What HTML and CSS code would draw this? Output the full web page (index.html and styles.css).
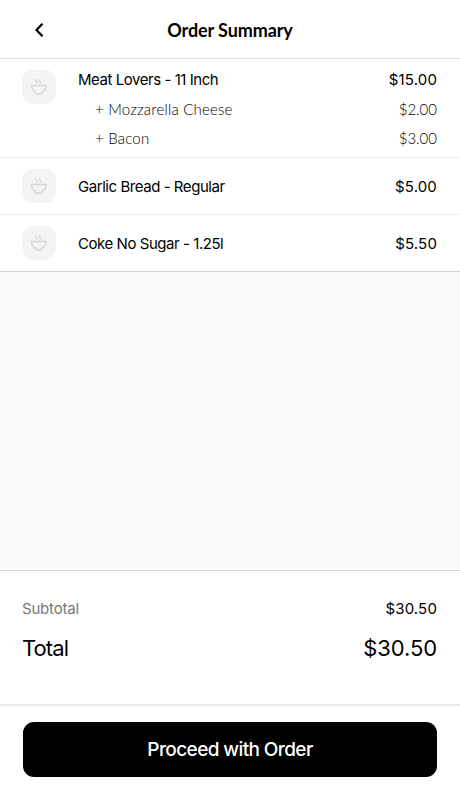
FILE: index.html
```html
<!DOCTYPE html>
<html lang="en">
<head>
    <meta charset="UTF-8">
    <title>Order Summary</title>
    <link rel="stylesheet" href="styles.css">
</head>
<body>
    <svg width="0" height="0" class="symbols">
        <symbol id="bowl" viewBox="0 0 18 18">
            <path d="M1.500 7.500h14.600c0 3.200-1.500 5.300-3.900 6.600l-.7 1.900H6.100l-.7-1.900C3 12.800 1.500 10.700 1.500 7.500z"/>
            <path d="M5.200 1.200c0 1.700 1.700 2 2 4.200M8.900 1.200c0 1.700 1.700 2 2 4.200"/>
        </symbol>
    </svg>
    <header class="header">
        <button class="back" aria-label="Back">
            <svg width="10" height="16" viewBox="0 0 10 16"><path d="M8.500 1.800L2.500 8l6 6.200"/></svg>
        </button>
        <h1 class="title">Order Summary</h1>
    </header>
    <main class="items">
        <div class="item item-first">
            <div class="thumb"><svg class="bowl"><use href="#bowl"/></svg></div>
            <div class="details">
                <div class="line"><span class="name">Meat Lovers - 11 Inch</span><span class="price">$15.00</span></div>
                <div class="line extra"><span class="extra-name">+ Mozzarella Cheese</span><span>$2.00</span></div>
                <div class="line extra"><span class="extra-name">+ Bacon</span><span>$3.00</span></div>
            </div>
        </div>
        <div class="item">
            <div class="thumb"><svg class="bowl"><use href="#bowl"/></svg></div>
            <div class="details">
                <div class="line"><span class="name">Garlic Bread - Regular</span><span class="price">$5.00</span></div>
            </div>
        </div>
        <div class="item">
            <div class="thumb"><svg class="bowl"><use href="#bowl"/></svg></div>
            <div class="details">
                <div class="line"><span class="name">Coke No Sugar - 1.25l</span><span class="price">$5.50</span></div>
            </div>
        </div>
    </main>
    <section class="totals">
        <div class="line subtotal"><span class="subtotal-label">Subtotal</span><span class="price">$30.50</span></div>
        <div class="line total"><span class="total-label">Total</span><span class="total-price">$30.50</span></div>
    </section>
    <footer class="footer">
        <button class="proceed">Proceed with Order</button>
    </footer>
</body>
</html>
```
FILE: styles.css
```css
* {
    box-sizing: border-box;
}
body {
    margin: 0;
    height: 100vh;
    display: flex;
    flex-direction: column;
    overflow: hidden;
    background: #f9f9f9;
    color: #000;
    font-family: Inter, "Liberation Sans", sans-serif;
    font-size: 15px;
}
.symbols {
    display: none;
}
.header {
    height: 59px;
    display: grid;
    grid-template-columns: 34px 1fr 34px;
    align-items: center;
    padding: 2px 22px 0;
    background: #fff;
    border-bottom: 1px solid #dcdcdc;
}
.back {
    display: flex;
    justify-content: center;
    padding: 0;
    border: 0;
    background: none;
}
.back path {
    fill: none;
    stroke: #000;
    stroke-width: 2.2;
}
.title {
    margin: 0;
    font-family: Lato, sans-serif;
    font-size: 18px;
    font-weight: bold;
    line-height: 24px;
    letter-spacing: -0.1px;
    text-align: center;
}
/* order lines */
.items {
    background: #fff;
    border-bottom: 1px solid #d3d3d3;
}
.item {
    display: flex;
    height: 56px;
    padding: 11px 23px 0 22px;
}
.item + .item {
    height: 57px;
    border-top: 1px solid #ededed;
}
.item-first {
    height: 98px;
}
.thumb {
    display: flex;
    align-items: center;
    justify-content: center;
    width: 34px;
    height: 34px;
    margin-right: 22px;
    border-radius: 11px;
    background: #f4f4f4;
}
.bowl {
    width: 18px;
    height: 18px;
    fill: none;
    stroke: #d6d6d6;
    stroke-width: 1.4;
}
.details {
    flex: 1;
    padding-top: 7px;
}
.item-first .details {
    margin-top: -1px;
    padding-top: 0;
}
.line {
    display: flex;
    justify-content: space-between;
    line-height: 21px;
}
.name {
    letter-spacing: -0.45px;
}
.price {
    letter-spacing: 0.15px;
}
.extra {
    height: 29px;
    padding-left: 17px;
    font-family: Lato, sans-serif;
    font-weight: 300;
    line-height: 38px;
}
.extra-name {
    letter-spacing: 0.2px;
}
/* amounts */
.totals {
    height: 134px;
    margin-top: auto;
    padding: 27px 23px 0 22px;
    background: #fff;
    border-top: 1px solid #d9d9d9;
}
.subtotal-label {
    color: #777;
    letter-spacing: -0.2px;
}
.total {
    padding-top: 13px;
    font-size: 22px;
    line-height: 32px;
}
.total-label {
    letter-spacing: -0.9px;
}
.total-price {
    letter-spacing: -0.1px;
}
.footer {
    height: 96px;
    padding: 16px 23px 0;
    background: #fff;
    border-top: 2px solid #ebebeb;
}
.proceed {
    width: 100%;
    height: 55px;
    padding: 0;
    border: 0;
    border-radius: 11px;
    background: #000;
    color: #fff;
    font-family: inherit;
    font-size: 19px;
    font-weight: 500;
    letter-spacing: -0.6px;
}
```
